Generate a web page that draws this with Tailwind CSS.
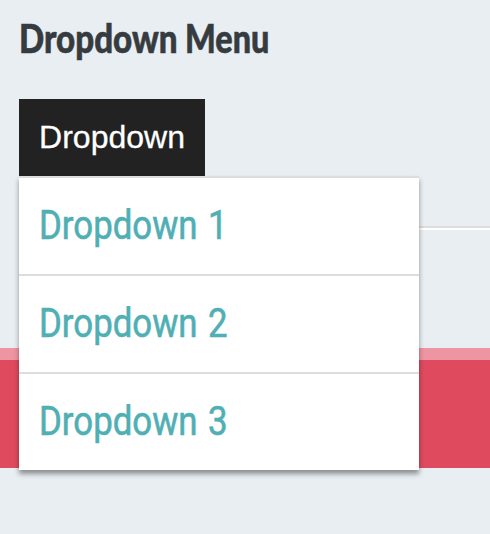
<!DOCTYPE html>
<html lang="en"><head><meta charset="utf-8"><title>Dropdown Menu</title>
<script src="https://cdn.jsdelivr.net/npm/@tailwindcss/browser@4"></script></head>
<body class="h-[534px] overflow-hidden bg-[#e8eef2] font-[Roboto,sans-serif]">
<header class="ml-[19px] h-[228px] border-b-2 border-[#ddd] pt-[16px] shadow-[0_2px_0_#fff]">
<h1 class="flex h-[83px] font-[Lato,sans-serif] text-[39px] leading-[45px] font-black text-[#363b40] [-webkit-text-stroke:0.6px_#363b40]"><span class="block w-[166px] origin-left scale-x-[0.85] whitespace-nowrap">Dropdown</span><span class="block origin-left scale-x-[0.83]">Menu</span></h1>
<div class="relative">
<button class="block h-[77px] w-[186px] bg-[#222] pb-[2px] font-['Liberation_Sans',sans-serif] text-[32px] text-white [-webkit-text-stroke:0.3px_white]">Dropdown</button>
<ul class="absolute top-[77px] left-0 z-10 w-[400px] bg-white text-[40px] leading-[96px] [word-spacing:2px] text-[#4fafb4] shadow-[0_4px_5px_rgba(0,0,0,0.4)] [-webkit-text-stroke:0.6px_#4fafb4]">
<li class="h-[98px] border-t-2 border-[#ddd] px-5"><span class="inline-block origin-left scale-x-[0.87]">Dropdown 1</span></li>
<li class="h-[98px] border-t-2 border-[#ddd] px-5"><span class="inline-block origin-left scale-x-[0.87]">Dropdown 2</span></li>
<li class="h-[98px] border-t-2 border-[#ddd] px-5"><span class="inline-block origin-left scale-x-[0.87]">Dropdown 3</span></li>
</ul></div></header>
<section class="mt-[120px] h-[120px] border-t-[12px] border-[#ee95a2] bg-[#e04a5f]"></section>
</body></html>
